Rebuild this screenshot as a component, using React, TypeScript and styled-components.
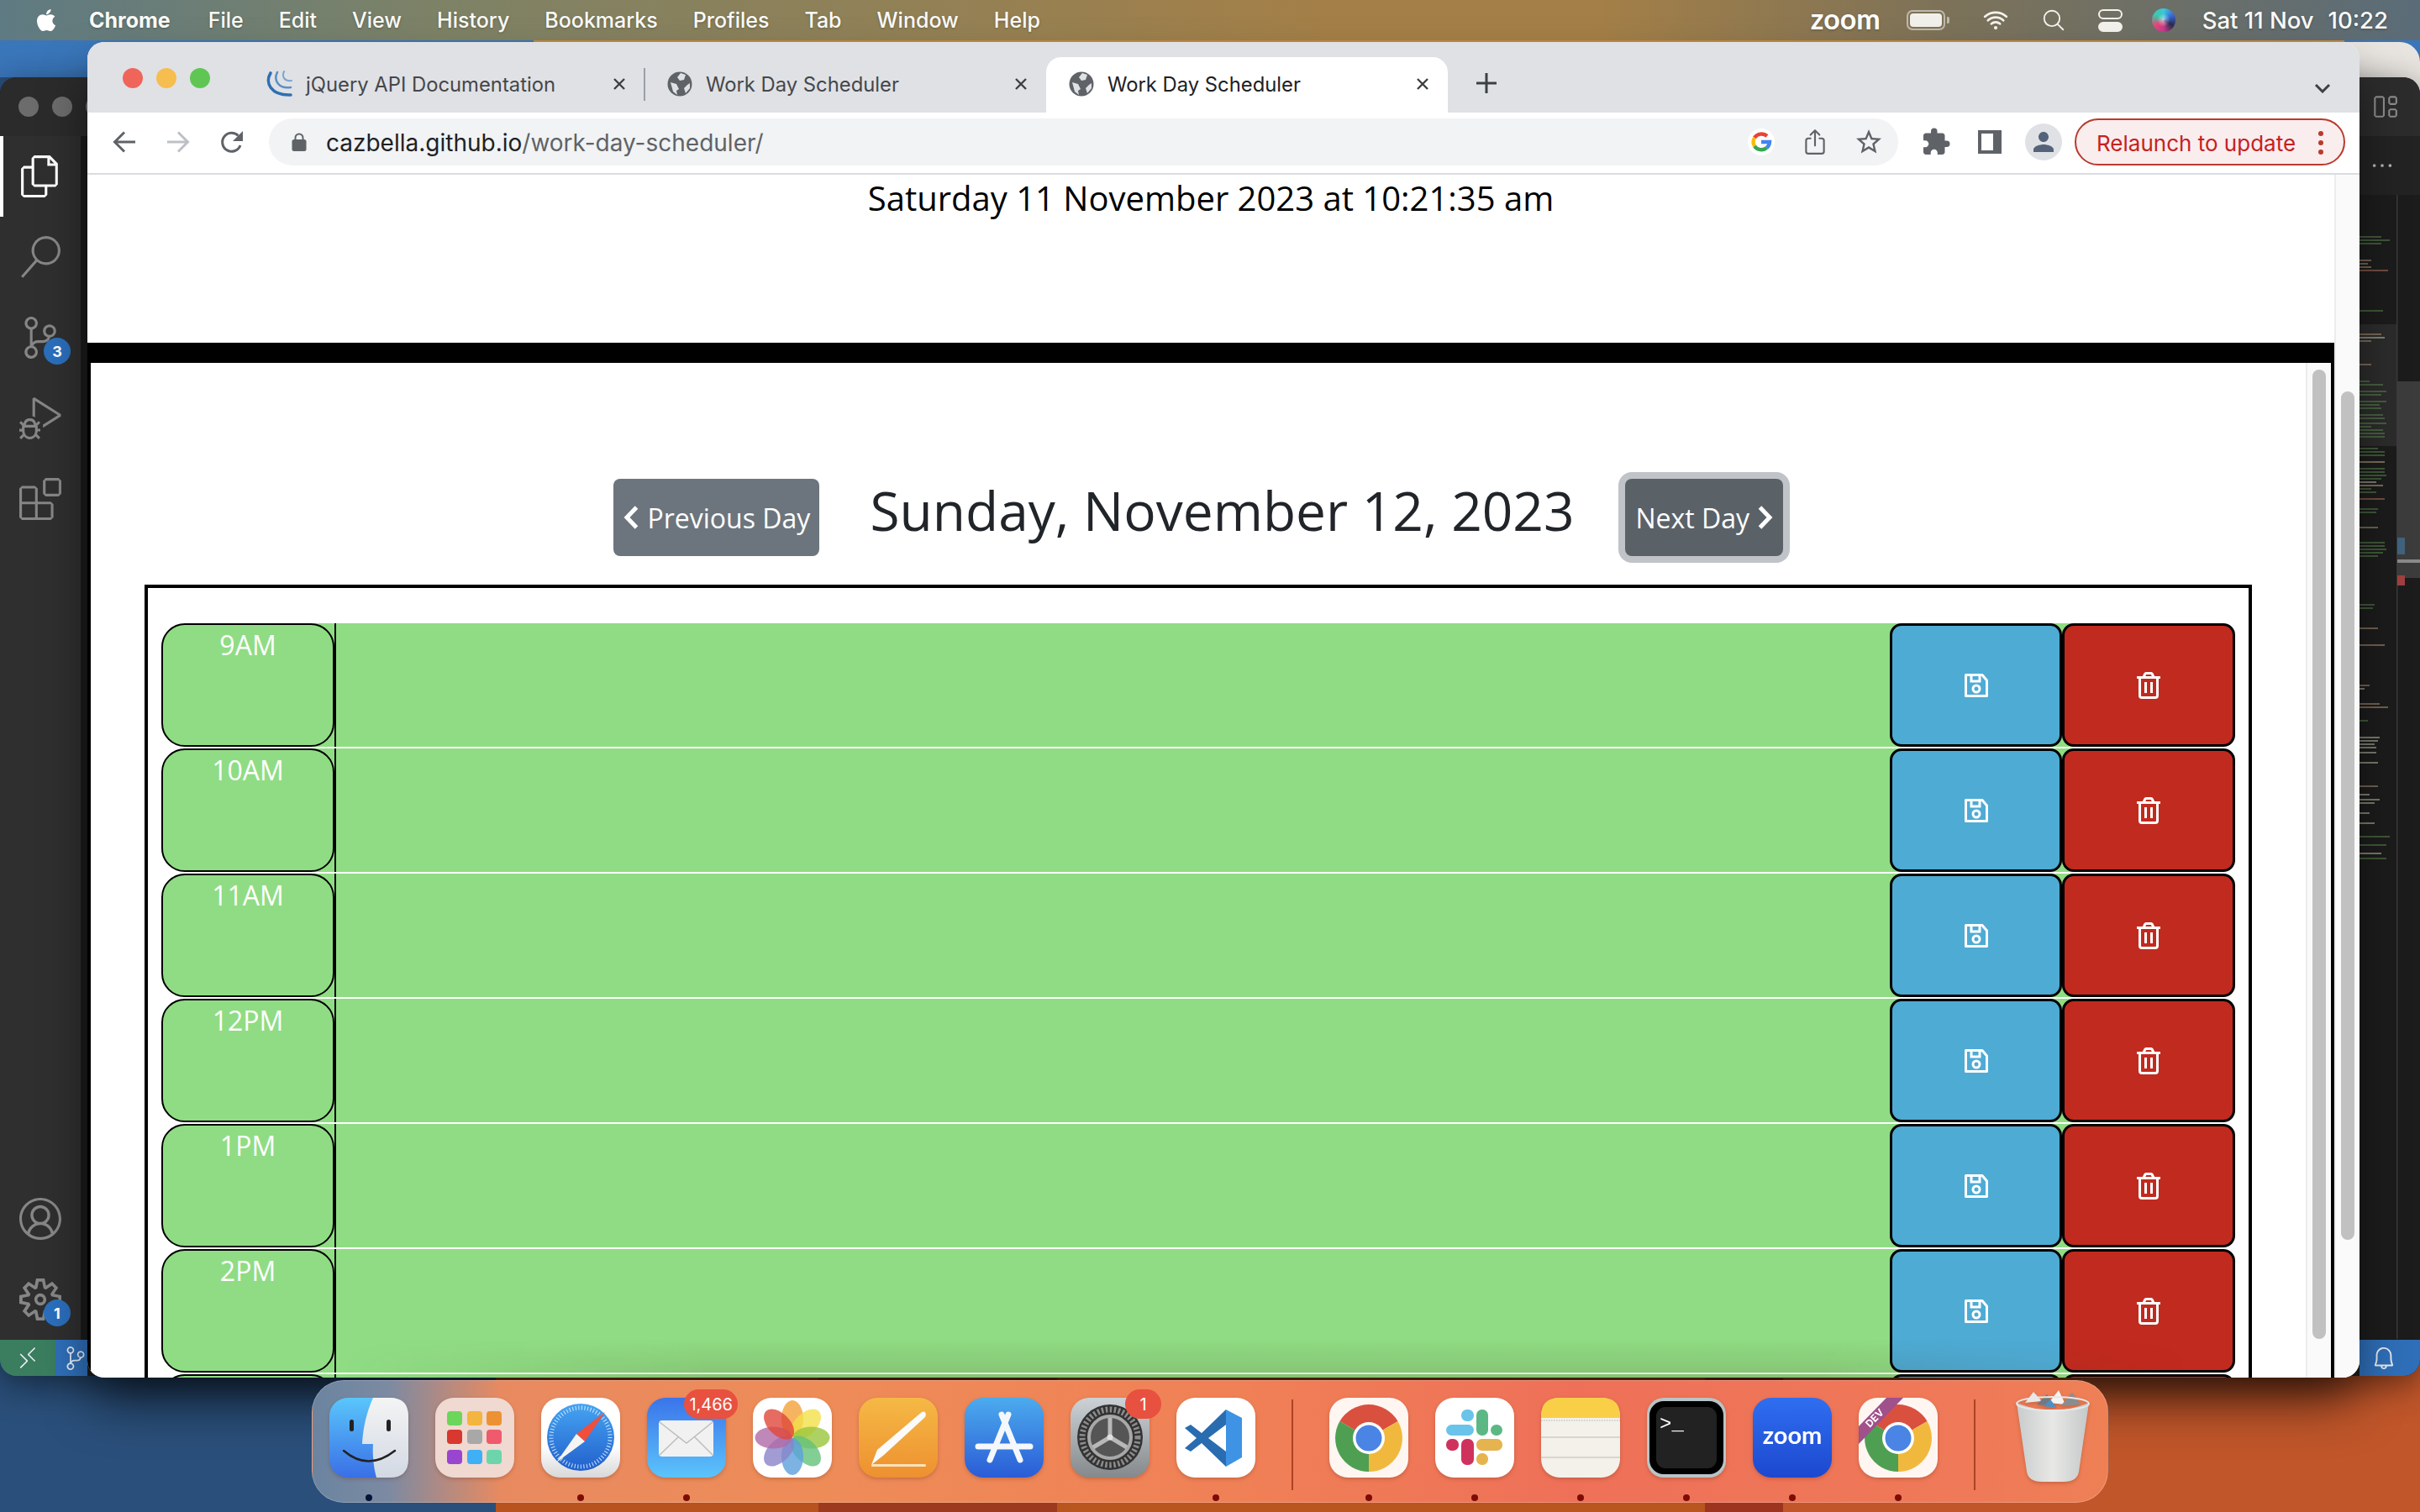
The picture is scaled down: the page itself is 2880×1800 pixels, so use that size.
import React from 'react';
import styled, { createGlobalStyle } from 'styled-components';
import { FaApple } from 'react-icons/fa';
import { IoSearchOutline, IoShareOutline, IoWifi } from 'react-icons/io5';
import { MdExtension, MdPerson, MdStarBorder } from 'react-icons/md';
import {
    VscAccount, VscBell, VscDebugAlt, VscEllipsis, VscExtensions, VscFiles, VscLayout,
    VscRemote, VscSearch, VscSettingsGear, VscSourceControl,
} from 'react-icons/vsc';

const uiFont = `Inter, "Liberation Sans", sans-serif`;
const pageFont = `"Open Sans", "Liberation Sans", sans-serif`;

const GlobalStyle = createGlobalStyle`
    html, body {
        margin: 0;
        width: 2880px;
        height: 1800px;
        overflow: hidden;
    }
    * { box-sizing: border-box; }
`;

const Desktop = styled.div`
    position: relative;
    width: 2880px;
    height: 1800px;
    overflow: hidden;
    font-family: ${uiFont};
    background:
        linear-gradient(90deg, #3a76ba 635px, #c58a40 635px, #c58a40 2790px, #3a76ba 2790px) top / 100% 92px no-repeat,
        linear-gradient(90deg, #2a4f7a 590px, #b8521f 590px, #b8521f 974px, #9c3a20 974px, #9c3a20 1258px, #b9551f 1258px, #b9551f 2029px, #9c3420 2029px, #9c3420 2122px, #c0562a 2122px);
`;

/* ---------- mac menu bar ---------- */

const MenuBar = styled.div`
    display: flex;
    align-items: center;
    height: 48px;
    padding: 0 38px 0 40px;
    color: #fff;
    font-size: 25px;
    text-shadow: 0 1px 3px rgba(0, 0, 0, 0.25);
    background: linear-gradient(90deg, #5e7a82 0%, #7d8266 18%, #a47f47 55%, #a47f47 66%, #7d7258 80%, #5a6c78 100%);
`;

const MenuList = styled.div`
    display: flex;
    align-items: center;
    gap: 42px;
    margin-left: 36px;
`;

const MenuItem = styled.span<{ $bold?: boolean }>`
    font-weight: ${p => (p.$bold ? 700 : 500)};
    color: #fbfbf8;
    margin-right: ${p => (p.$bold ? 3 : 0)}px;
`;

const StatusArea = styled.div`
    display: flex;
    align-items: center;
    margin-left: auto;
`;

const ZoomWord = styled.span`
    font-family: Lato, sans-serif;
    font-weight: 700;
    font-size: 34px;
    line-height: 1;
    margin-right: 31px;
    margin-top: -4px;
`;

const Battery = styled.span`
    position: relative;
    display: block;
    width: 46px;
    height: 24px;
    border: 2px solid rgba(255, 255, 255, 0.5);
    border-radius: 7px;
    padding: 2px;
    margin-right: 43px;
    &::before {
        content: '';
        display: block;
        height: 100%;
        background: #f2f0ea;
        border-radius: 4px;
    }
    &::after {
        content: '';
        position: absolute;
        right: -7px;
        top: 6px;
        width: 3px;
        height: 8px;
        background: rgba(255, 255, 255, 0.5);
        border-radius: 0 2px 2px 0;
    }
`;

const SearchGlyph = styled(IoSearchOutline)`
    margin-left: 37px;
`;

const ControlCentre = styled.span`
    display: flex;
    flex-direction: column;
    gap: 3px;
    margin: 0 35px 0 38px;
`;

const ControlPill = styled.span<{ $filled?: boolean }>`
    display: block;
    width: 29px;
    height: 12px;
    border-radius: 6px;
    border: 2px solid #f4f2ec;
    background: ${p => (p.$filled ? '#f4f2ec' : 'transparent')};
`;

const Siri = styled.span`
    display: block;
    width: 28px;
    height: 28px;
    border-radius: 50%;
    margin-right: 32px;
    background:
        radial-gradient(circle at 50% 50%, rgba(255, 255, 255, 0.5) 0, transparent 40%),
        conic-gradient(#3dc7d8, #3a6ad8, #2a2a50, #c83a8a, #e04a78, #3dc7a8, #3dc7d8);
`;

const ClockText = styled.span`
    font-size: 27.5px;
    font-weight: 500;
    color: #fbfbf8;
    & + & {
        margin-left: 17px;
    }
`;

/* ---------- vs code window behind chrome ---------- */

const BackWindow = styled.div`
    position: absolute;
    left: 2600px;
    top: 50px;
    width: 280px;
    height: 200px;
    border-radius: 24px;
    background: #e9e5e0;
`;

const CodeWindow = styled.div`
    position: absolute;
    left: 0;
    right: 0;
    top: 92px;
    height: 1546px;
    display: flex;
    justify-content: space-between;
    background: #1e1e1e;
    border-radius: 20px;
    overflow: hidden;
    box-shadow: 0 10px 40px rgba(0, 0, 0, 0.5);
`;

const CodeLeft = styled.div`
    width: 104px;
    display: flex;
    flex-direction: column;
`;

const CodeTitle = styled.div`
    height: 70px;
    flex: none;
    display: flex;
    align-items: center;
    gap: 16px;
    padding-left: 22px;
    background: #2b2b2b;
`;

const GreyDot = styled.span`
    width: 24px;
    height: 24px;
    flex: none;
    border-radius: 50%;
    background: #6c6c6c;
`;

const CodeMiddle = styled.div`
    flex: 1;
    display: flex;
`;

const ActivityBar = styled.div`
    width: 96px;
    display: flex;
    flex-direction: column;
    justify-content: space-between;
    background: #2f2f2f;
`;

const ActivityGroup = styled.div`
    display: flex;
    flex-direction: column;
`;

const ActivityItem = styled.div<{ $active?: boolean }>`
    position: relative;
    width: 96px;
    height: 96px;
    display: flex;
    align-items: center;
    justify-content: center;
    color: ${p => (p.$active ? '#ffffff' : '#868686')};
    border-left: 4px solid ${p => (p.$active ? '#ffffff' : 'transparent')};
    padding-right: 4px;
`;

const ActivityBadge = styled.span`
    position: absolute;
    left: 48px;
    top: 48px;
    width: 32px;
    height: 32px;
    display: flex;
    align-items: center;
    justify-content: center;
    border-radius: 50%;
    background: #2b6fbd;
    color: #fff;
    font-size: 18px;
    font-weight: 700;
`;

const SideStrip = styled.div`
    flex: 1;
    background: #1b1b1b;
`;

const StatusBar = styled.div`
    height: 43px;
    flex: none;
    display: flex;
    background: #2f6fb9;
    color: #e8eef5;
`;

const RemoteBox = styled.div`
    width: 68px;
    display: flex;
    align-items: center;
    justify-content: center;
    background: #3a7d5f;
`;

const BranchBox = styled.div`
    flex: 1;
    display: flex;
    align-items: center;
    padding-left: 10px;
`;

const CodeRight = styled.div`
    width: 72px;
    display: flex;
    flex-direction: column;
`;

const RightTitle = styled.div`
    height: 70px;
    flex: none;
    display: flex;
    align-items: center;
    padding-left: 13px;
    background: #2c2c2c;
    color: #8c8c8c;
`;

const RightTabs = styled.div`
    height: 70px;
    flex: none;
    display: flex;
    align-items: center;
    padding-left: 12px;
    background: #232323;
    color: #b0b0b0;
`;

const MinimapArea = styled.div`
    flex: 1;
    background: #1c1c1c;
    overflow: hidden;
`;

const RightStatus = styled(StatusBar)`
    align-items: center;
    justify-content: flex-end;
    padding-right: 28px;
`;

/* ---------- chrome window ---------- */

const ChromeWindow = styled.div`
    position: absolute;
    left: 104px;
    top: 50px;
    width: 2704px;
    height: 1590px;
    display: flex;
    flex-direction: column;
    background: #fff;
    border-radius: 20px;
    overflow: hidden;
    box-shadow: 0 34px 60px -8px rgba(0, 0, 0, 0.6);
    &::after {
        content: '';
        position: absolute;
        left: 300px;
        right: 200px;
        bottom: 0;
        height: 46px;
        pointer-events: none;
        background: linear-gradient(180deg, transparent, rgba(60, 30, 0, 0.13));
        mask-image: linear-gradient(90deg, transparent, #000 20%, #000 80%, transparent);
    }
`;

const TabStrip = styled.div`
    height: 84px;
    flex: none;
    display: flex;
    align-items: flex-end;
    background: #dfe1e5;
`;

const TrafficLights = styled.div`
    align-self: flex-start;
    display: flex;
    gap: 16px;
    margin: 31px 39px 0 42px;
`;

const Light = styled.span<{ $color: string }>`
    width: 24px;
    height: 24px;
    border-radius: 50%;
    background: ${p => p.$color};
`;

const Tab = styled.div<{ $active?: boolean }>`
    position: relative;
    width: 478px;
    height: 66px;
    flex: none;
    display: flex;
    align-items: center;
    gap: 16px;
    padding: 0 22px 2px 27px;
    font-size: 23.8px;
    color: ${p => (p.$active ? '#202124' : '#45474a')};
    background: ${p => (p.$active ? '#fff' : 'transparent')};
    border-radius: 18px 18px 0 0;
`;

const TabDivider = styled.span`
    position: absolute;
    right: -1px;
    top: 13px;
    width: 2px;
    height: 39px;
    background: #9aa0a6;
`;

const TabLabel = styled.span`
    flex: 1;
    white-space: nowrap;
`;

const NewTab = styled.div`
    display: flex;
    margin: 0 0 23px 34px;
    color: #3c4043;
`;

const TabListButton = styled.div`
    display: flex;
    margin: 0 34px 23px auto;
    color: #3c4043;
`;

const Toolbar = styled.div`
    height: 74px;
    flex: none;
    display: flex;
    align-items: center;
    padding: 0 17px 2px 12px;
    background: #fff;
    border-bottom: 2px solid #dadce0;
`;

const ToolButton = styled.div<{ $color?: string }>`
    width: 64px;
    height: 56px;
    flex: none;
    display: flex;
    align-items: center;
    justify-content: center;
    color: ${p => p.$color || '#5f6368'};
`;

const AddressBar = styled.div`
    flex: 1;
    height: 56px;
    display: flex;
    align-items: center;
    margin: 0 13px 0 12px;
    padding: 0 3px 0 27px;
    border-radius: 28px;
    background: #f1f3f4;
`;

const UrlText = styled.span`
    margin: 2px 0 0 23px;
    font-size: 28px;
    color: #5f6368;
    white-space: nowrap;
    b {
        font-weight: 400;
        color: #202124;
    }
`;

const AddressIcons = styled.div`
    display: flex;
    margin-left: auto;
`;

const Avatar = styled.span`
    width: 44px;
    height: 44px;
    display: flex;
    align-items: center;
    justify-content: center;
    border-radius: 50%;
    background: #dfe1e5;
    color: #55637a;
`;

const RelaunchButton = styled.div`
    width: 322px;
    height: 56px;
    margin-left: 5px;
    flex: none;
    display: flex;
    align-items: center;
    justify-content: space-between;
    padding: 2px 24px 0 24px;
    border: 2px solid #b93a2e;
    border-radius: 28px;
    background: #f9eded;
    color: #c5221f;
    font-size: 26px;
    white-space: nowrap;
`;

const MoreDots = styled.span`
    display: flex;
    flex-direction: column;
    gap: 5px;
    i {
        display: block;
        width: 6px;
        height: 6px;
        border-radius: 50%;
        background: #b93a2e;
    }
`;

/* ---------- the scheduler page ---------- */

const Viewport = styled.div`
    flex: 1;
    min-height: 0;
    display: flex;
`;

const OuterPage = styled.div`
    flex: 1;
    min-width: 0;
    display: flex;
    flex-direction: column;
    font-family: ${pageFont};
`;

const LiveClock = styled.div`
    height: 200px;
    flex: none;
    text-align: center;
    font-size: 40px;
    line-height: 56px;
    color: #000;
`;

const BlackBar = styled.div`
    height: 24px;
    flex: none;
    background: #000;
`;

const InnerFrame = styled.div`
    flex: 1;
    min-height: 0;
    display: flex;
    border-left: 4px solid #000;
    border-right: 4px solid #000;
`;

const InnerPage = styled.div`
    flex: 1;
    min-width: 0;
    padding: 138px 64px 0;
    overflow: hidden;
`;

const DayHeader = styled.div`
    display: flex;
    align-items: center;
    justify-content: center;
    gap: 60px;
    height: 92px;
    margin-bottom: 34px;
`;

const DayButton = styled.div<{ $focus?: boolean }>`
    width: ${p => (p.$focus ? 188 : 245)}px;
    height: 92px;
    display: flex;
    align-items: center;
    gap: ${p => (p.$focus ? 10 : 10)}px;
    padding: ${p => (p.$focus ? '0 0 0 13px' : '0 0 0 12px')};
    border-radius: 8px;
    font-size: 32px;
    color: #fff;
    white-space: nowrap;
    background: ${p => (p.$focus ? '#5a6268' : '#6c757d')};
    box-shadow: ${p => (p.$focus ? '0 0 0 8px rgba(130, 138, 145, 0.5)' : 'none')};
`;

const DayTitle = styled.h1`
    margin: 0 0 16px;
    font-size: 64px;
    font-weight: 400;
    line-height: 76px;
    color: #212529;
    white-space: nowrap;
`;

const Planner = styled.div`
    border: 4px solid #000;
    border-bottom: 0;
    padding: 42px 16px 0;
`;

const HourRow = styled.div`
    display: flex;
    height: 149px;
    border-bottom: 2px solid #fff;
    background: linear-gradient(
        90deg,
        transparent 100px,
        #90dc84 100px,
        #90dc84 calc(100% - 100px),
        transparent calc(100% - 100px)
    );
`;

const HourCell = styled.div`
    width: 206px;
    flex: none;
    padding-top: 2px;
    text-align: center;
    font-size: 32px;
    line-height: 44px;
    color: #fff;
    background: #90dc84;
    border: 2px solid #000;
    border-radius: 28px;
`;

const TaskArea = styled.div`
    flex: 1;
    border-left: 2px solid #000;
`;

const RowButton = styled.div<{ $kind: 'save' | 'remove' }>`
    width: ${p => (p.$kind === 'save' ? 205 : 206)}px;
    flex: none;
    display: flex;
    align-items: center;
    justify-content: center;
    border: 3px solid #000;
    border-radius: 14px;
    background: ${p => (p.$kind === 'save' ? '#4eabd4' : '#c12a1f')};
    color: #fff;
`;

const InnerTrack = styled.div`
    width: 30px;
    flex: none;
    padding: 8px 6px 0 6px;
    background: #fafafa;
    border-left: 2px solid #ececec;
`;

const OuterTrack = styled.div`
    width: 30px;
    flex: none;
    padding: 258px 6px 0 6px;
    background: #fafafa;
    border-left: 2px solid #ececec;
`;

const Thumb = styled.div<{ $length: number }>`
    width: 16px;
    height: ${p => p.$length}px;
    border-radius: 8px;
    background: #c1c1c1;
`;

/* ---------- dock ---------- */

const Dock = styled.div`
    position: absolute;
    left: 371px;
    top: 1643px;
    width: 2138px;
    height: 146px;
    display: flex;
    align-items: flex-start;
    gap: 32px;
    padding: 20px 0 0 20px;
    border: 1px solid rgba(255, 255, 255, 0.22);
    border-radius: 38px;
    background: linear-gradient(90deg, #6b84a0 0, #7c8aa2 90px, #b58a80 160px, #e88a60 225px, #ee8c58 600px, #f08056 1100px, #ee7058 1500px, #ef7a58 2000px, #ee8055 100%);
`;

const DockItem = styled.div`
    position: relative;
    width: 94px;
    flex: none;
    display: flex;
    flex-direction: column;
    align-items: center;
`;

const DockDot = styled.span<{ $running?: boolean; $navy?: boolean }>`
    width: 8px;
    height: 8px;
    margin-top: 20px;
    border-radius: 50%;
    background: ${p => (!p.$running ? 'transparent' : p.$navy ? '#05133a' : '#7c0c04')};
`;

const DockBadge = styled.span`
    position: absolute;
    top: -10px;
    right: -14px;
    height: 35px;
    min-width: 43px;
    padding: 0 6px;
    display: flex;
    align-items: center;
    justify-content: center;
    border-radius: 18px;
    background: #e8503f;
    color: #fff;
    font-size: 20px;
`;

const DockSeparator = styled.span`
    width: 2px;
    height: 108px;
    flex: none;
    margin: 2px 11px 0;
    background: rgba(150, 50, 20, 0.75);
`;

const AppSvg = styled.svg`
    display: block;
    width: 94px;
    height: 95px;
    filter: drop-shadow(0 2px 2px rgba(90, 30, 10, 0.25));
`;

const TrashSvg = styled(AppSvg)`
    height: 111px;
    margin: -10px 0 -6px 3px;
`;

/* ---------- small drawings ---------- */

const Squircle = ({ fill }: { fill: string }) => <rect width="94" height="95" rx="22" fill={fill} />;

const Finder = () => (
    <AppSvg viewBox="0 0 94 95">
        <defs>
            <linearGradient id="finderL" x1="0" y1="0" x2="0" y2="1"><stop offset="0" stopColor="#5ac6fb" /><stop offset="1" stopColor="#3a6fe6" /></linearGradient>
            <linearGradient id="finderR" x1="0" y1="0" x2="0" y2="1"><stop offset="0" stopColor="#f4f4f4" /><stop offset="1" stopColor="#d2d9e4" /></linearGradient>
        </defs>
        <Squircle fill="url(#finderL)" />
        <path d="M52 0 C44 18 40 36 39 55 H52 C51 70 53 84 56 95 H72 Q94 95 94 73 V22 Q94 0 72 0 Z" fill="url(#finderR)" />
        <rect x="24" y="26" width="5" height="14" rx="2.5" fill="#222" />
        <rect x="68" y="26" width="5" height="14" rx="2.5" fill="#222" />
        <path d="M17 63 Q46 88 78 63" fill="none" stroke="#222" strokeWidth="2.5" strokeLinecap="round" />
    </AppSvg>
);

const launchpadTiles = [
    [14, 16, '#6bd65a'], [38, 16, '#f3b53f'], [61, 16, '#ec9233'],
    [14, 38, '#d8382f'], [38, 38, '#a8a8a8'], [61, 38, '#ef5a6d'],
    [14, 62, '#9a45d0'], [38, 62, '#3fb0f5'], [61, 62, '#6dd5ac'],
] as const;

const Launchpad = () => (
    <AppSvg viewBox="0 0 94 95">
        <Squircle fill="#efd9d0" />
        {launchpadTiles.map(([x, y, c]) => <rect key={`${x}-${y}`} x={x} y={y} width="18" height="17" rx="4" fill={c} />)}
    </AppSvg>
);

const Safari = () => (
    <AppSvg viewBox="0 0 94 95">
        <defs>
            <linearGradient id="safariBg" x1="0" y1="0" x2="0" y2="1"><stop offset="0.6" stopColor="#fff" /><stop offset="1" stopColor="#d8d8d8" /></linearGradient>
            <linearGradient id="safariDial" x1="0" y1="0" x2="0" y2="1"><stop offset="0" stopColor="#45a4f2" /><stop offset="1" stopColor="#2260cc" /></linearGradient>
        </defs>
        <Squircle fill="url(#safariBg)" />
        <circle cx="47" cy="47" r="40" fill="url(#safariDial)" />
        <circle cx="47" cy="47" r="35" fill="none" stroke="#cfe6fb" strokeWidth="5" strokeDasharray="1 2.6" />
        <polygon points="76,17 52,52 42,43" fill="#ef4f3c" />
        <polygon points="18,77 52,52 42,43" fill="#f4f4f4" />
    </AppSvg>
);

const Mail = () => (
    <AppSvg viewBox="0 0 94 95">
        <defs>
            <linearGradient id="mailBg" x1="0" y1="0" x2="0" y2="1"><stop offset="0" stopColor="#3a74ea" /><stop offset="1" stopColor="#5cc4fb" /></linearGradient>
        </defs>
        <Squircle fill="url(#mailBg)" />
        <rect x="14" y="27" width="65" height="43" rx="4" fill="#f1f1f1" />
        <path d="M15 29 L47 54 L78 29 M15 68 L38 46 M78 68 L56 46" fill="none" stroke="#bdbdbd" strokeWidth="1.5" />
    </AppSvg>
);

const petals = ['#f4a13a', '#f3e04a', '#9ac63c', '#63c27a', '#5da0dc', '#8a83c8', '#b06aa8', '#e0473a'];

const Photos = () => (
    <AppSvg viewBox="0 0 94 95">
        <Squircle fill="#fff" />
        {petals.map((c, i) => (
            <ellipse key={c} cx="47" cy="25" rx="13" ry="22" fill={c} opacity="0.8" transform={`rotate(${i * 45} 47 47.5)`} />
        ))}
    </AppSvg>
);

const PenApp = () => (
    <AppSvg viewBox="0 0 94 95">
        <defs>
            <linearGradient id="penBg" x1="0" y1="0" x2="0" y2="1"><stop offset="0" stopColor="#f5b945" /><stop offset="1" stopColor="#ee9030" /></linearGradient>
        </defs>
        <Squircle fill="url(#penBg)" />
        <path d="M75 17 C79 15 81 19 79 23 L30 68 L15 80 L22 62 Z" fill="#fbfbfb" />
        <rect x="15" y="79" width="65" height="3" rx="1.5" fill="#fde3b8" />
    </AppSvg>
);

const AppStore = () => (
    <AppSvg viewBox="0 0 94 95">
        <defs>
            <linearGradient id="storeBg" x1="0" y1="0" x2="0" y2="1"><stop offset="0" stopColor="#4cabee" /><stop offset="1" stopColor="#2a5cd6" /></linearGradient>
        </defs>
        <Squircle fill="url(#storeBg)" />
        <path d="M44 20 L66 74 M52 20 L30 74 M16 58 H78" fill="none" stroke="#f4f7fb" strokeWidth="7" strokeLinecap="round" />
    </AppSvg>
);

const SystemSettings = () => (
    <AppSvg viewBox="0 0 94 95">
        <defs>
            <linearGradient id="settingsBg" x1="0" y1="0" x2="0" y2="1"><stop offset="0" stopColor="#ccd2d6" /><stop offset="1" stopColor="#85898c" /></linearGradient>
        </defs>
        <Squircle fill="url(#settingsBg)" />
        <circle cx="47" cy="47" r="39" fill="#333" />
        <circle cx="47" cy="47" r="33" fill="none" stroke="#8c8c8c" strokeWidth="7" strokeDasharray="2.5 2.5" />
        <circle cx="47" cy="47" r="25" fill="#555" stroke="#a8a8a8" strokeWidth="4" />
        <path d="M47 47 V24 M47 47 L27 59 M47 47 L67 59" stroke="#b8b8b8" strokeWidth="5" />
        <circle cx="47" cy="47" r="3.5" fill="#e0e0e0" />
    </AppSvg>
);

const VsCodeApp = () => (
    <AppSvg viewBox="0 0 94 95">
        <Squircle fill="#fff" />
        <polygon points="59,14 78,24 78,71 59,82" fill="#3f93e4" />
        <polygon points="59,14 59,32 38,48 59,64 59,82 30,54 17,64 10,60 24,48 10,36 17,32 30,42" fill="#2a6cb0" />
    </AppSvg>
);

const ChromeMark = () => (
    <>
        <path d="M47 48 L12.4 28 A40 40 0 0 1 81.6 28 Z" fill="#d9503f" />
        <path d="M47 48 L81.6 28 A40 40 0 0 1 47 88 Z" fill="#f0b93e" />
        <path d="M47 48 L47 88 A40 40 0 0 1 12.4 28 Z" fill="#4f9f52" />
        <circle cx="47" cy="48" r="19" fill="#fff" />
        <circle cx="47" cy="48" r="15.5" fill="#4a84e4" />
    </>
);

const ChromeApp = () => (
    <AppSvg viewBox="0 0 94 95">
        <Squircle fill="#fff6f2" />
        <ChromeMark />
    </AppSvg>
);

const ChromeDevApp = () => (
    <AppSvg viewBox="0 0 94 95">
        <Squircle fill="#fff6f2" />
        <ChromeMark />
        <polygon points="33,0 53,0 0,55 0,34" fill="#a0508a" />
        <text x="22" y="27" textAnchor="middle" fill="#fff" fontSize="12" fontWeight="700" fontFamily={uiFont} transform="rotate(-46 22 27)">DEV</text>
    </AppSvg>
);

const slackPills = [
    [31, 14, 15, 14, '#6ac4ea'], [13, 32, 33, 13, '#6ac4ea'],
    [49, 14, 14, 31, '#5bb884'], [66, 32, 14, 13, '#5bb884'],
    [13, 49, 15, 14, '#d0325e'], [31, 49, 15, 31, '#d0325e'],
    [49, 49, 31, 14, '#e6b44e'], [49, 66, 14, 14, '#e6b44e'],
] as const;

const Slack = () => (
    <AppSvg viewBox="0 0 94 95">
        <Squircle fill="#fff" />
        {slackPills.map(([x, y, w, h, c]) => <rect key={`${x}-${y}`} x={x} y={y} width={w} height={h} rx="6.5" fill={c} />)}
    </AppSvg>
);

const Notes = () => (
    <AppSvg viewBox="0 0 94 95">
        <Squircle fill="#f3f1ea" />
        <path d="M0 24 V22 Q0 0 22 0 H72 Q94 0 94 22 V24 Z" fill="#f9cf48" />
        <path d="M0 27 H94" stroke="#c8c6c0" strokeWidth="1.5" strokeDasharray="1.5 1.5" />
        <path d="M0 47 H94 M0 71 H94" stroke="#d8d6cf" strokeWidth="2" />
    </AppSvg>
);

const Terminal = () => (
    <AppSvg viewBox="0 0 94 95">
        <rect width="94" height="95" rx="20" fill="#b9c4c6" />
        <rect x="3" y="4" width="88" height="87" rx="17" fill="#000" />
        <rect x="11" y="11" width="72" height="73" rx="11" fill="#222" />
        <text x="15" y="38" fill="#fff" fontSize="24" fontFamily={`"Liberation Mono", monospace`}>{'>_'}</text>
    </AppSvg>
);

const ZoomApp = () => (
    <AppSvg viewBox="0 0 94 95">
        <defs>
            <linearGradient id="zoomBg" x1="0" y1="0" x2="0" y2="1"><stop offset="0" stopColor="#2f6ef0" /><stop offset="1" stopColor="#1c48cf" /></linearGradient>
        </defs>
        <Squircle fill="url(#zoomBg)" />
        <text x="47" y="55" textAnchor="middle" fill="#fff" fontSize="29" fontWeight="700" fontFamily="Lato, sans-serif">zoom</text>
    </AppSvg>
);

const Trash = () => (
    <TrashSvg viewBox="0 0 94 111">
        <defs>
            <linearGradient id="trashBg" x1="0" y1="0" x2="1" y2="0"><stop offset="0" stopColor="#c8cccc" /><stop offset="0.5" stopColor="#e8e8e6" /><stop offset="1" stopColor="#c4c8c8" /></linearGradient>
        </defs>
        <polygon points="14,16 24,3 34,14" fill="#e8e8e8" />
        <polygon points="28,18 40,6 50,20" fill="#6f7a80" />
        <polygon points="42,16 54,1 62,18" fill="#f4f4f4" />
        <polygon points="56,20 70,4 80,18" fill="#8a8d90" />
        <polygon points="36,20 44,12 52,22" fill="#4f8fc0" />
        <path d="M4 16 Q47 34 90 16 L78 98 Q76 110 60 110 H34 Q18 110 16 98 Z" fill="url(#trashBg)" />
        <ellipse cx="47" cy="17" rx="43" ry="8" fill="none" stroke="#e6e8e8" strokeWidth="2" />
    </TrashSvg>
);

const Arrow = ({ flip }: { flip?: boolean }) => (
    <svg width="28" height="28" viewBox="0 0 28 28" fill="none" stroke="currentColor" strokeWidth="3" style={flip ? { transform: 'scaleX(-1)' } : undefined}>
        <path d="M27 14 H3 M14 2.5 L2.5 14 L14 25.5" />
    </svg>
);

const Reload = () => (
    <svg width="28" height="28" viewBox="0 0 28 28" fill="none">
        <path d="M24 18 A11 11 0 1 1 21.5 6.5" stroke="currentColor" strokeWidth="3" />
        <path d="M27 1 V13 H15 Z" fill="currentColor" />
    </svg>
);

const Lock = () => (
    <svg width="18" height="22" viewBox="0 0 18 22">
        <path d="M4.5 9 V6 A4.5 4.5 0 0 1 13.5 6 V9" fill="none" stroke="#5f6368" strokeWidth="2" />
        <rect x="0.5" y="8" width="17" height="14" rx="2.5" fill="#5f6368" />
    </svg>
);

const JQueryIcon = () => (
    <svg width="32" height="32" viewBox="0 0 32 32" fill="none" stroke="#2f6fb4" strokeLinecap="round">
        <path d="M6 3 C-1 14 6 30 30 29" strokeWidth="3.6" />
        <path d="M14 2 C9 12 16 22 30 20" strokeWidth="2.6" stroke="#5a90c8" />
        <path d="M22 1 C19 8 23 13 31 12" strokeWidth="2" stroke="#7aa6d2" />
    </svg>
);

const GlobeIcon = () => (
    <svg width="30" height="30" viewBox="0 0 30 30">
        <circle cx="15" cy="15" r="14.5" fill="#5f6368" />
        <path d="M16 2 L22 4 L20 10 L15 11 L12 7 Z M24 16 L27 14 L27 20 L22 26 L20 20 Z M4 13 L11 15 L14 21 L11 23 L12 28 L7 24 Z" fill="#dfe1e5" />
    </svg>
);

const CloseX = () => (
    <svg width="16" height="16" viewBox="0 0 16 16" stroke="#3c4043" strokeWidth="2.4">
        <path d="M2 2 L14 14 M14 2 L2 14" />
    </svg>
);

const Plus = () => (
    <svg width="24" height="24" viewBox="0 0 24 24" stroke="currentColor" strokeWidth="3">
        <path d="M12 0 V24 M0 12 H24" />
    </svg>
);

const ChevronDown = () => (
    <svg width="20" height="12" viewBox="0 0 20 12" fill="none" stroke="currentColor" strokeWidth="3">
        <path d="M2 2 L10 10 L18 2" />
    </svg>
);

const GoogleG = () => (
    <svg width="32" height="32" viewBox="0 0 32 32">
        <circle cx="16" cy="16" r="16" fill="#fff" />
        <g fill="none" strokeWidth="4.4">
            <path d="M23 9 A10 10 0 0 0 8 11" stroke="#ea4335" />
            <path d="M8 11 A10 10 0 0 0 8 21" stroke="#fbbc05" />
            <path d="M8 21 A10 10 0 0 0 22.5 23" stroke="#34a853" />
            <path d="M22.5 23 A10 10 0 0 0 26 16 H16" stroke="#4285f4" />
        </g>
    </svg>
);

const SidePanel = () => (
    <svg width="28" height="28" viewBox="0 0 28 28">
        <path d="M0 0 H28 V28 H0 Z M4 4 V24 H18 V4 Z" fill="currentColor" fillRule="evenodd" />
    </svg>
);

const Chevron = ({ right }: { right?: boolean }) => (
    <svg width="18" height="28" viewBox="0 0 18 28" fill="none" stroke="#fff" strokeWidth="5" style={right ? { transform: 'scaleX(-1)' } : undefined}>
        <path d="M15.5 2 L4 14 L15.5 26" />
    </svg>
);

const SaveIcon = () => (
    <svg width="30" height="30" viewBox="0 0 30 30" fill="none" stroke="currentColor" strokeWidth="3">
        <path d="M2.5 2.5 H22 L27.5 9 V27.5 H2.5 Z" strokeLinejoin="round" />
        <path d="M9 3 V10 H19 V3" />
        <circle cx="15" cy="19" r="4" />
    </svg>
);

const TrashIcon = () => (
    <svg width="28" height="32" viewBox="0 0 28 32" fill="none" stroke="currentColor" strokeWidth="3">
        <path d="M0 6.5 H28" />
        <path d="M8 6 L10 2 Q10.5 1.5 11 1.5 H17 Q17.5 1.5 18 2 L20 6" />
        <path d="M3.5 7 V28 Q3.5 30.5 6 30.5 H22 Q24.5 30.5 24.5 28 V7" />
        <path d="M10.5 12 V25 M17.5 12 V25" />
    </svg>
);

// y, width, colour of the tiny code lines in the minimap, top of the file downwards
const minimapLines: [number, number, string][] = [
    [50, 26, '#5c8a50'], [54, 36, '#5c8a50'], [58, 26, '#5c8a50'],
    [78, 14, '#b89a7c'], [82, 10, '#b89a7c'], [86, 14, '#b89a7c'], [90, 34, '#b8775c'],
    [138, 28, '#5c8a50'], [166, 26, '#b89a7c'], [170, 30, '#c8c8b0'], [174, 14, '#b89a7c'],
    [202, 14, '#b89a7c'], [222, 12, '#5c8a50'], [226, 28, '#5c8a50'], [234, 32, '#5c8a50'], [238, 26, '#5c8a50'],
    [246, 32, '#5c8a50'], [250, 24, '#5c8a50'], [254, 26, '#5c8a50'], [262, 28, '#5c8a50'], [266, 30, '#5c8a50'],
    [272, 32, '#5c8a50'], [276, 14, '#5c8a50'], [280, 28, '#5c8a50'], [284, 30, '#5c8a50'], [288, 30, '#5c8a50'],
    [302, 22, '#5c8a50'], [306, 30, '#5c8a50'], [310, 30, '#5c8a50'], [318, 30, '#c8b090'], [326, 30, '#5c8a50'], [330, 30, '#5c8a50'],
    [334, 32, '#5c8a50'], [338, 26, '#5c8a50'], [342, 20, '#c8c8b0'], [346, 28, '#c8b090'], [350, 14, '#5c8a50'], [354, 20, '#5c8a50'],
    [362, 30, '#b8775c'], [374, 22, '#5c8a50'], [378, 20, '#5c8a50'], [396, 22, '#b89a7c'],
    [414, 30, '#5c8a50'], [418, 30, '#5c8a50'], [422, 32, '#5c8a50'], [426, 28, '#5c8a50'], [430, 22, '#5c8a50'],
    [488, 18, '#5c8a50'], [492, 16, '#5c8a50'], [516, 22, '#b89a7c'], [536, 30, '#b89a7c'],
    [584, 12, '#b89a7c'], [588, 6, '#c8c8b0'], [606, 24, '#b89a7c'], [610, 34, '#b89a7c'], [626, 10, '#5c8a50'],
    [646, 24, '#c8c8b0'], [650, 22, '#c8c8b0'], [654, 18, '#c8c8b0'], [658, 20, '#c8c8b0'], [664, 20, '#c8c8b0'], [676, 22, '#c8c8b0'],
    [704, 22, '#b89a7c'], [714, 12, '#c8c8b0'], [720, 24, '#c8c8b0'], [724, 18, '#c8c8b0'], [736, 12, '#c8c8b0'], [748, 18, '#c8c8b0'],
    [764, 36, '#5c8a50'], [774, 32, '#5c8a50'], [784, 26, '#c8c8b0'], [790, 32, '#5c8a50'],
];

const Minimap = () => (
    <svg width="72" height="1362" viewBox="0 0 72 1362">
        <rect x="0" y="154" width="44" height="145" fill="#2c2c2c" />
        {minimapLines.map(([y, w, c]) => <rect key={y} x="0" y={y - 1} width={w} height="2" fill={c} opacity="0.55" />)}
        <rect x="44" y="0" width="1.5" height="1362" fill="#3a3a3a" />
        <rect x="45" y="222" width="27" height="234" fill="#3c3c3c" />
        <rect x="45" y="408" width="9" height="20" fill="#41637d" />
        <rect x="45" y="434" width="27" height="4" fill="#8a8a8a" />
        <rect x="45" y="453" width="9" height="12" fill="#a04040" />
    </svg>
);

// the last row is only just showing at the bottom of the window, its label is out of sight
const hours = ['9AM', '10AM', '11AM', '12PM', '1PM', '2PM', ''];

const App = () => {
    return (
        <Desktop>
            <GlobalStyle />
            <MenuBar>
                <FaApple size={30} />
                <MenuList>
                    <MenuItem $bold>Chrome</MenuItem>
                    {['File', 'Edit', 'View', 'History', 'Bookmarks', 'Profiles', 'Tab', 'Window', 'Help'].map(item => (
                        <MenuItem key={item}>{item}</MenuItem>
                    ))}
                </MenuList>
                <StatusArea>
                    <ZoomWord>zoom</ZoomWord>
                    <Battery />
                    <IoWifi size={34} color="#f4f2ec" />
                    <SearchGlyph size={30} color="#f4f2ec" />
                    <ControlCentre>
                        <ControlPill />
                        <ControlPill $filled />
                    </ControlCentre>
                    <Siri />
                    <ClockText>Sat 11 Nov</ClockText>
                    <ClockText>10:22</ClockText>
                </StatusArea>
            </MenuBar>

            <BackWindow />

            <CodeWindow>
                <CodeLeft>
                    <CodeTitle>
                        <GreyDot />
                        <GreyDot />
                        <GreyDot />
                    </CodeTitle>
                    <CodeMiddle>
                        <ActivityBar>
                            <ActivityGroup>
                                <ActivityItem $active><VscFiles size={50} /></ActivityItem>
                                <ActivityItem><VscSearch size={50} /></ActivityItem>
                                <ActivityItem><VscSourceControl size={50} /><ActivityBadge>3</ActivityBadge></ActivityItem>
                                <ActivityItem><VscDebugAlt size={50} /></ActivityItem>
                                <ActivityItem><VscExtensions size={50} /></ActivityItem>
                            </ActivityGroup>
                            <ActivityGroup>
                                <ActivityItem><VscAccount size={50} /></ActivityItem>
                                <ActivityItem><VscSettingsGear size={50} /><ActivityBadge>1</ActivityBadge></ActivityItem>
                            </ActivityGroup>
                        </ActivityBar>
                        <SideStrip />
                    </CodeMiddle>
                    <StatusBar>
                        <RemoteBox><VscRemote size={30} /></RemoteBox>
                        <BranchBox><VscSourceControl size={28} /></BranchBox>
                    </StatusBar>
                </CodeLeft>
                <CodeRight>
                    <RightTitle><VscLayout size={34} /></RightTitle>
                    <RightTabs><VscEllipsis size={30} /></RightTabs>
                    <MinimapArea><Minimap /></MinimapArea>
                    <RightStatus><VscBell size={30} /></RightStatus>
                </CodeRight>
            </CodeWindow>

            <ChromeWindow>
                <TabStrip>
                    <TrafficLights>
                        <Light $color="#f0655a" />
                        <Light $color="#f6bd4f" />
                        <Light $color="#60c653" />
                    </TrafficLights>
                    <Tab>
                        <JQueryIcon />
                        <TabLabel>jQuery API Documentation</TabLabel>
                        <CloseX />
                        <TabDivider />
                    </Tab>
                    <Tab>
                        <GlobeIcon />
                        <TabLabel>Work Day Scheduler</TabLabel>
                        <CloseX />
                    </Tab>
                    <Tab $active>
                        <GlobeIcon />
                        <TabLabel>Work Day Scheduler</TabLabel>
                        <CloseX />
                    </Tab>
                    <NewTab><Plus /></NewTab>
                    <TabListButton><ChevronDown /></TabListButton>
                </TabStrip>

                <Toolbar>
                    <ToolButton><Arrow /></ToolButton>
                    <ToolButton $color="#bdc1c6"><Arrow flip /></ToolButton>
                    <ToolButton><Reload /></ToolButton>
                    <AddressBar>
                        <Lock />
                        <UrlText><b>cazbella.github.io</b>/work-day-scheduler/</UrlText>
                        <AddressIcons>
                            <ToolButton><GoogleG /></ToolButton>
                            <ToolButton><IoShareOutline size={34} /></ToolButton>
                            <ToolButton><MdStarBorder size={36} /></ToolButton>
                        </AddressIcons>
                    </AddressBar>
                    <ToolButton><MdExtension size={36} /></ToolButton>
                    <ToolButton><SidePanel /></ToolButton>
                    <ToolButton><Avatar><MdPerson size={36} /></Avatar></ToolButton>
                    <RelaunchButton>
                        Relaunch to update
                        <MoreDots><i /><i /><i /></MoreDots>
                    </RelaunchButton>
                </Toolbar>

                <Viewport>
                    <OuterPage>
                        <LiveClock>Saturday 11 November 2023 at 10:21:35 am</LiveClock>
                        <BlackBar />
                        <InnerFrame>
                            <InnerPage>
                                <DayHeader>
                                    <DayButton><Chevron /> Previous Day</DayButton>
                                    <DayTitle>Sunday, November 12, 2023</DayTitle>
                                    <DayButton $focus>Next Day <Chevron right /></DayButton>
                                </DayHeader>
                                <Planner>
                                    {hours.map((hour, i) => (
                                        <HourRow key={i}>
                                            <HourCell>{hour}</HourCell>
                                            <TaskArea />
                                            <RowButton $kind="save"><SaveIcon /></RowButton>
                                            <RowButton $kind="remove"><TrashIcon /></RowButton>
                                        </HourRow>
                                    ))}
                                </Planner>
                            </InnerPage>
                            <InnerTrack><Thumb $length={1154} /></InnerTrack>
                        </InnerFrame>
                    </OuterPage>
                    <OuterTrack><Thumb $length={1010} /></OuterTrack>
                </Viewport>
            </ChromeWindow>

            <Dock>
                <DockItem><Finder /><DockDot $running $navy /></DockItem>
                <DockItem><Launchpad /><DockDot /></DockItem>
                <DockItem><Safari /><DockDot $running /></DockItem>
                <DockItem><Mail /><DockBadge>1,466</DockBadge><DockDot $running /></DockItem>
                <DockItem><Photos /><DockDot /></DockItem>
                <DockItem><PenApp /><DockDot /></DockItem>
                <DockItem><AppStore /><DockDot /></DockItem>
                <DockItem><SystemSettings /><DockBadge>1</DockBadge><DockDot /></DockItem>
                <DockItem><VsCodeApp /><DockDot $running /></DockItem>
                <DockSeparator />
                <DockItem><ChromeApp /><DockDot $running /></DockItem>
                <DockItem><Slack /><DockDot $running /></DockItem>
                <DockItem><Notes /><DockDot $running /></DockItem>
                <DockItem><Terminal /><DockDot $running /></DockItem>
                <DockItem><ZoomApp /><DockDot $running /></DockItem>
                <DockItem><ChromeDevApp /><DockDot $running /></DockItem>
                <DockSeparator />
                <DockItem><Trash /></DockItem>
            </Dock>
        </Desktop>
    );
};

export default App;
